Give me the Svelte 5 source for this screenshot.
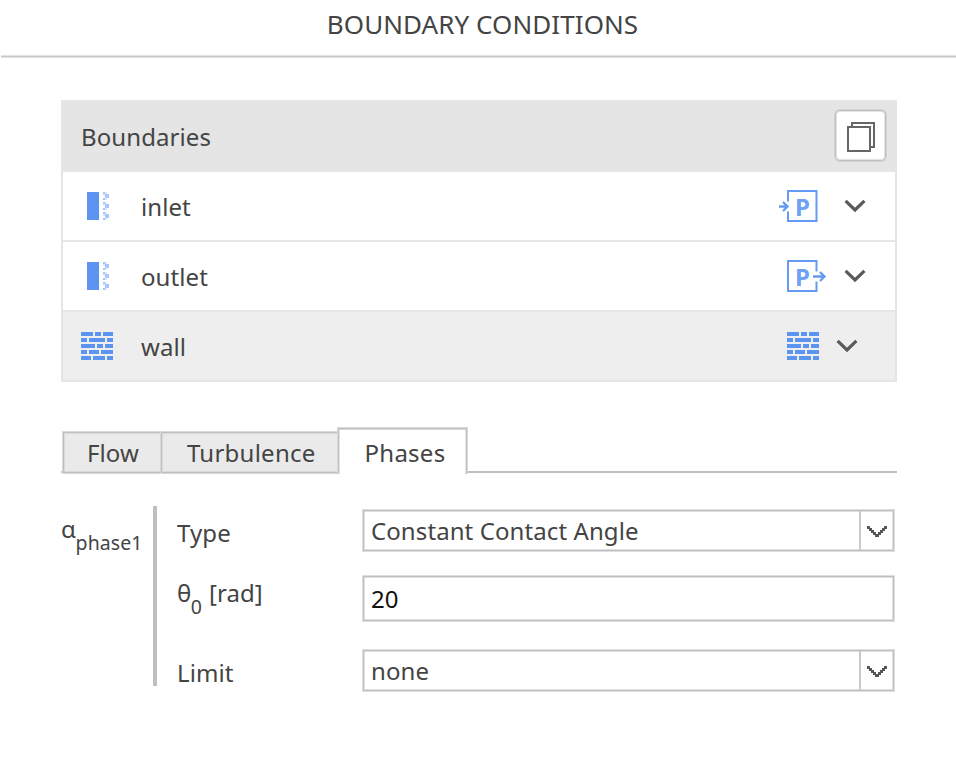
<script lang="ts">
    interface Boundary {
        name: string;
        kind: 'inlet' | 'outlet' | 'wall';
    }

    const boundaries: Boundary[] = [
        { name: 'inlet', kind: 'inlet' },
        { name: 'outlet', kind: 'outlet' },
        { name: 'wall', kind: 'wall' },
    ];
    const tabs = ['Flow', 'Turbulence', 'Phases'];

    // [x, y, width] of every brick
    const bricks = [
        [0, 0, 12], [14, 0, 6], [22, 0, 10],
        [0, 6, 6], [8, 6, 16], [26, 6, 6],
        [0, 12, 14], [16, 12, 6], [24, 12, 8],
        [0, 18, 6], [8, 18, 10], [20, 18, 12],
        [0, 24, 10], [12, 24, 12], [26, 24, 6],
    ];

    let selected = $state('wall');
    let activeTab = $state('Phases');
    let theta = $state('20');
</script>

{#snippet wallIcon()}
    <svg width="32" height="28" viewBox="0 0 32 28" fill="#5c94f2">
        {#each bricks as [x, y, w]}
            <rect {x} {y} width={w} height="4" />
        {/each}
    </svg>
{/snippet}

{#snippet patchIcon()}
    <svg width="32" height="28" viewBox="0 0 32 28">
        <rect x="6" width="12" height="28" fill="#5c94f2" />
        {#each [0, 10, 20] as y}
            <path d="M22 {y}h2v2h-2zM22 {y + 6}h2v2h-2z" fill="#a3c3fa" />
            <path d="M24 {y + 2}h4v4h-4z" fill="#a9c7fa" />
            <path d="M24 {y}h2v2h-2zM22 {y + 2}h2v2h-2zM24 {y + 6}h2v2h-2z" fill="#dbe7fd" />
        {/each}
    </svg>
{/snippet}

{#snippet chevron()}
    <svg class="chevron" width="24" height="16" viewBox="0 0 24 16" fill="none">
        <path d="M2.6 2.8L12 12L21.4 2.8" stroke="#5a5a5a" stroke-width="3.2" />
    </svg>
{/snippet}

{#snippet dropdownArrow()}
    <svg width="20" height="12" viewBox="0 0 20 12">
        <path d="M0 0h3v2h2v2h2v2h2v2h2v-2h2v-2h2v-2h2v-2h3v3h-2v2h-2v2h-2v2h-2v2h-4v-2h-2v-2h-2v-2h-2v-2h-2z" fill="#555" />
    </svg>
{/snippet}

<div class="page">
    <h1>BOUNDARY CONDITIONS</h1>

    <section class="boundaries">
        <header>
            <span>Boundaries</span>
            <button class="copy" aria-label="Select all">
                <svg width="28" height="30" viewBox="0 0 28 30" fill="none" stroke="#666" stroke-width="2">
                    <path d="M5 4V1H27V25H24" />
                    <rect x="1" y="5" width="22" height="24" />
                </svg>
            </button>
        </header>
        {#each boundaries as b}
            <button class="row" class:selected={selected === b.name} onclick={() => (selected = b.name)}>
                {#if b.kind === 'wall'}
                    {@render wallIcon()}
                {:else}
                    {@render patchIcon()}
                {/if}
                <span class="name">{b.name}</span>
                <span class="type {b.kind}">
                    {#if b.kind === 'inlet'}
                        <svg width="48" height="32" viewBox="0 0 48 32" fill="none" stroke="#659af4" stroke-width="2">
                            <path d="M9 11.5V1H37.5V31H9V21.5" />
                            <path d="M0 16.5H8M4 12L8.5 16.5L4 21" stroke-width="2.3" />
                            <text x="16" y="25.5">P</text>
                        </svg>
                    {:else if b.kind === 'outlet'}
                        <svg width="48" height="32" viewBox="0 0 48 32" fill="none" stroke="#659af4" stroke-width="2">
                            <path d="M37.5 11.5V1H9V31H37.5V21.5" />
                            <path d="M34 16.5H46M41 12L45.5 16.5L41 21" stroke-width="2.3" />
                            <text x="16" y="25.5">P</text>
                        </svg>
                    {:else}
                        {@render wallIcon()}
                    {/if}
                </span>
                {@render chevron()}
            </button>
        {/each}
    </section>

    <nav class="tabs">
        {#each tabs as tab}
            <button class:active={activeTab === tab} onclick={() => (activeTab = tab)}>{tab}</button>
        {/each}
    </nav>

    <section class="form">
        <div class="phase">α<sub>phase1</sub></div>
        <div class="fields">
            <div class="field">
                <span class="label">Type</span>
                <div class="select">
                    <span>Constant Contact Angle</span>
                    <i>{@render dropdownArrow()}</i>
                </div>
            </div>
            <div class="field theta">
                <label class="label" for="theta">θ<sub>0</sub> [rad]</label>
                <input id="theta" bind:value={theta} />
            </div>
            <div class="field">
                <span class="label">Limit</span>
                <div class="select">
                    <span>none</span>
                    <i>{@render dropdownArrow()}</i>
                </div>
            </div>
        </div>
    </section>
</div>

<style>
    :global(body) {
        background: #fff;
    }

    .page {
        height: 781px;
        overflow: hidden;
        font-family: 'Noto Sans', sans-serif;
        font-size: 24px;
        line-height: 32px;
        letter-spacing: 0.09px;
        color: #444;
    }

    .page * {
        box-sizing: border-box;
    }

    button, input {
        font: inherit;
        letter-spacing: inherit;
        color: inherit;
        margin: 0;
        padding: 0;
        border: 0;
    }

    svg {
        display: block;
        flex: none;
    }

    h1 {
        margin: 0 0 0 1px;
        height: 57px;
        padding: 7px 0 0 8px;
        font-size: 26px;
        line-height: 34px;
        font-weight: 400;
        letter-spacing: 0.07px;
        text-align: center;
        border-bottom: 1px solid #c8c8c8;
        box-shadow: 0 1px #e4e4e4, inset 0 -1px #e4e4e4;
    }

    .boundaries {
        margin: 43px 59px 0 61px;
        border: solid #e5e5e5;
        border-width: 0 2px;
    }

    .boundaries header {
        display: flex;
        justify-content: space-between;
        height: 72px;
        padding: 10px 9px 0 18px;
        background: #e5e5e5;
    }

    .boundaries header span {
        margin-top: 11px;
    }

    .copy {
        display: flex;
        align-items: center;
        justify-content: center;
        width: 51px;
        height: 51px;
        padding-top: 3px;
        padding-left: 1px;
        background: #fff;
        border: 1px solid #c0c0c0;
        border-radius: 5px;
        box-shadow: 0 0 0 1px #d3d3d3, inset 0 0 0 1px #e4e4e4;
    }

    .row {
        display: flex;
        align-items: center;
        width: 100%;
        height: 70px;
        padding-left: 18px;
        border-bottom: 2px solid #e5e5e5;
        background: #fff;
        text-align: left;
    }

    .row.selected {
        background: #eee;
    }

    .name {
        flex: 1;
        margin: 2px 0 0 28px;
    }

    .type {
        width: 48px;
        margin-right: 16px;
    }

    .type.wall {
        width: 32px;
    }

    .type text {
        font-size: 24px;
        font-weight: 700;
        fill: #6fa1f5;
        stroke: none;
    }

    .row .chevron {
        margin-right: 28px;
    }

    .row.selected .chevron {
        margin-right: 36px;
    }

    .tabs {
        display: flex;
        align-items: flex-end;
        height: 46px;
        margin: 45px 59px 0 61px;
        padding-left: 2px;
        background: linear-gradient(#bfbfbf, #bfbfbf) 0 44px / 100% 2px no-repeat;
    }

    .tabs button {
        height: 41px;
        padding: 0 22px 0 23px;
        background: #eaeaea;
        border: 1px solid #c0c0c0;
        box-shadow: 0 0 0 1px #d9d9d9, inset 0 0 0 1px #d9d9d9;
    }

    .tabs button + button {
        margin-left: -1px;
        padding-left: 25px;
        letter-spacing: 0.25px;
    }

    .tabs button.active {
        height: 46px;
        margin-bottom: -1px;
        padding: 2px 21px 0 26px;
        background: #fff;
        border-bottom: 0;
        box-shadow: 0 0 0 1px #d9d9d9, inset 0 1px #d9d9d9, inset -1px 0 #e4e4e4, inset 1px 0 #e4e4e4;
        clip-path: inset(-1px -1px 0 -1px);
    }

    .form {
        display: flex;
        height: 187px;
        margin: 33px 61px 0 61px;
    }

    .phase {
        width: 92px;
        height: 180px;
        padding-top: 7px;
        white-space: nowrap;
    }

    sub {
        position: relative;
        top: 6px;
        font-size: 19.5px;
        line-height: 0;
        margin-left: -0.5px;
    }

    .fields {
        flex: 1;
        height: 180px;
        padding: 4px 0 0 20px;
        border-left: 4px solid #bfbfbf;
    }

    .field {
        display: flex;
        justify-content: space-between;
        height: 41px;
    }

    .field.theta {
        height: 45px;
        margin: 25px 0 29px;
    }

    .label {
        margin-top: 7px;
    }

    .theta .label {
        margin-top: 1px;
    }

    .theta sub {
        margin-right: 0.5px;
    }

    .select, input {
        display: flex;
        width: 531px;
        height: 41px;
        margin-right: 1px;
        padding-left: 7px;
        background: #fff;
        border: 1px solid #c0c0c0;
        box-shadow: 0 0 0 1px #dedede, inset 0 0 0 1px #dedede;
    }

    .select span {
        flex: 1;
        margin-top: 4px;
    }

    .select i {
        display: flex;
        align-items: center;
        justify-content: center;
        width: 34px;
        padding-top: 3px;
        border-left: 2px solid #cacaca;
    }

    input {
        height: 45px;
        color: #111;
        outline: none;
    }
</style>
